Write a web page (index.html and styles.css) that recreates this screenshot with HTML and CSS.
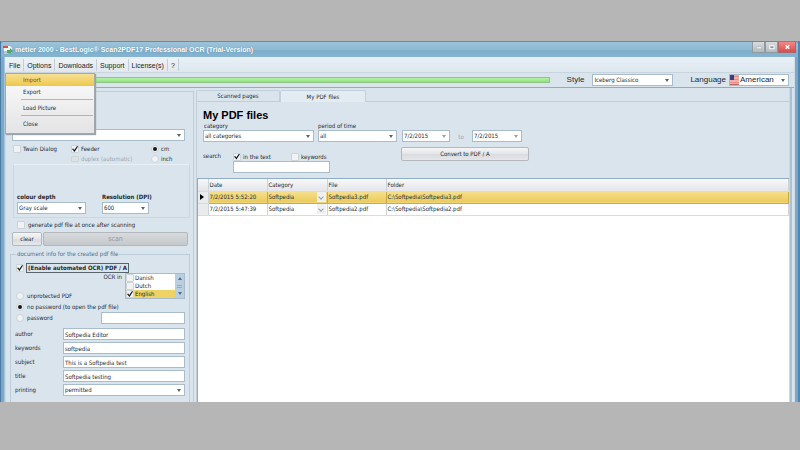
FILE: index.html
```html
<!DOCTYPE html>
<html lang="en">
<head>
<meta charset="utf-8">
<title>Scan2PDF17</title>
<link rel="stylesheet" href="styles.css">
</head>
<body>
<div class="window">
  <header class="titlebar">
    <svg class="app-icon" viewBox="0 0 10 10" aria-hidden="true">
      <path d="M1 1h6l2 2v5H1z" fill="#f5f7f5"/>
      <path d="M0 1h5v2H0z" fill="#d6504a"/>
      <path d="M1 6h4v3H1z" fill="#b9c6ce"/>
      <path d="M4 5h3V3l3 3-3 3V8H4z" fill="#55a468"/>
    </svg>
    <h1 class="title">métier 2000 - BestLogic® Scan2PDF17 Professional OCR (Trial-Version)</h1>
    <div class="window-buttons">
      <button class="win-btn" aria-label="Minimize"><svg viewBox="0 0 13 11"><path d="M4 5.500h6v2H4z" fill="#fff" stroke="#888" stroke-width=".4"/></svg></button>
      <button class="win-btn" aria-label="Maximize"><svg viewBox="0 0 13 11"><path d="M4.500 4h5v3.500h-5z" fill="#999" stroke="#fff" stroke-width="1.200"/></svg></button>
      <button class="win-btn win-close" aria-label="Close window"><svg viewBox="0 0 18 11"><path d="M7.500 3.500l4 4m0-4l-4 4" stroke="#fff" stroke-width="1.600"/></svg></button>
    </div>
  </header>

  <div class="client">
    <nav class="menubar">
      <button class="menu-item">File</button>
      <button class="menu-item">Options</button>
      <button class="menu-item">Downloads</button>
      <button class="menu-item">Support</button>
      <button class="menu-item">License(s)</button>
      <button class="menu-item">?</button>
      <div class="menu">
        <button class="menu-entry active">Import</button>
        <button class="menu-entry">Export</button>
        <hr>
        <button class="menu-entry">Load Picture</button>
        <hr>
        <button class="menu-entry">Close</button>
      </div>
    </nav>

    <div class="toolbar">
      <div class="progress"></div>
      <label class="tool-label" for="style">Style</label>
      <span class="combo style-combo"><select id="style"><option>Iceberg Classico</option></select></span>
      <label class="tool-label language-label" for="language">Language</label>
      <span class="combo language-combo">
        <svg class="flag" viewBox="0 0 9 10" aria-hidden="true"><path d="M0 0h9v10H0z" fill="#f3b0aa"/><path d="M0 1.500h9M0 4.500h9M0 7.500h9" stroke="#e98b86"/><path d="M0 0h4v5H0z" fill="#3c3f7c"/><path d="M0 9h9v1H0z" fill="#b86a66"/></svg>
        <select id="language"><option>American</option></select></span>
    </div>

    <div class="main">
      <aside class="scan-panel">
        <span class="combo"><select aria-label="Scanner"><option></option></select></span>
        <div class="source-options">
          <label class="check"><input type="checkbox">Twain Dialog</label>
          <label class="check"><input type="checkbox" checked>Feeder</label>
          <label class="check"><input type="radio" name="unit" checked>cm</label>
          <label class="check disabled duplex"><input type="checkbox" disabled>duplex (automatic)</label>
          <label class="check"><input type="radio" name="unit">inch</label>
        </div>
        <div class="quality">
          <label class="strong" for="depth">colour depth</label>
          <label class="strong" for="dpi">Resolution (DPI)</label>
          <span class="combo depth-combo"><select id="depth"><option>Gray scale</option></select></span>
          <span class="combo dpi-combo"><select id="dpi"><option>600</option></select></span>
        </div>
        <label class="check generate"><input type="checkbox">generate pdf file at once after scanning</label>
        <div class="scan-buttons">
          <button class="btn">clear</button>
          <button class="btn scan" disabled>scan</button>
        </div>
        <fieldset class="doc-info">
          <legend>document info for the created pdf file</legend>
          <label class="check ocr"><input type="checkbox" checked><span class="focus">(Enable automated OCR) PDF / A</span></label>
          <div class="protection">
            <span class="ocr-in">OCR in</span>
            <div class="listbox">
              <div class="languages">
                <label class="check"><input type="checkbox">Danish</label>
                <label class="check"><input type="checkbox">Dutch</label>
                <label class="check selected"><input type="checkbox" checked>English</label>
              </div>
              <div class="scrollbar"><i class="up"></i><i class="grip"></i><i class="down"></i></div>
            </div>
            <label class="check"><input type="radio" name="protect">unprotected PDF</label>
          </div>
          <label class="check open-pw"><input type="radio" name="protect" checked>no password (to open the pdf file)</label>
          <div class="password-row">
            <label class="check"><input type="radio" name="protect">password</label>
            <input class="field" type="text" aria-label="Password">
          </div>
          <div class="meta">
            <label for="author">author</label><input class="field" id="author" type="text" value="Softpedia Editor">
            <label for="keywords">keywords</label><input class="field" id="keywords" type="text" value="softpedia">
            <label for="subject">subject</label><input class="field" id="subject" type="text" value="This is a Softpedia test">
            <label for="doctitle">title</label><input class="field" id="doctitle" type="text" value="Softpedia testing">
            <label for="printing">printing</label><span class="combo"><select id="printing"><option>permitted</option></select></span>
          </div>
        </fieldset>
      </aside>

      <section class="files-panel">
        <div class="tabs" role="tablist">
          <button class="tab" role="tab">Scanned pages</button>
          <button class="tab current" role="tab" aria-selected="true">My PDF files</button>
        </div>
        <div class="page">
          <div class="filters">
            <h2>My PDF files</h2>
            <div class="filter-row">
              <div class="filter category-filter"><label for="category">category</label><span class="combo"><select id="category"><option>all categories</option></select></span></div>
              <div class="filter period-filter"><label for="period">period of time</label><span class="combo"><select id="period"><option>all</option></select></span></div>
              <span class="combo pale date-from"><select aria-label="From"><option>7/2/2015</option></select></span>
              <span class="to">to</span>
              <span class="combo pale date-to"><select aria-label="To"><option>7/2/2015</option></select></span>
            </div>
            <div class="search-row">
              <label for="search">search</label>
              <div class="search-box">
                <div class="search-options">
                  <label class="check"><input type="checkbox" checked>in the text</label>
                  <label class="check"><input type="checkbox">keywords</label>
                </div>
                <input class="field" id="search" type="text">
              </div>
              <button class="btn convert">Convert to PDF / A</button>
            </div>
          </div>
          <div class="grid">
            <table>
              <colgroup><col class="c-mark"><col class="c-date"><col class="c-cat"><col class="c-file"><col></colgroup>
              <thead><tr><th></th><th>Date</th><th>Category</th><th>File</th><th>Folder</th></tr></thead>
              <tbody>
                <tr class="selected"><td class="mark"><i class="pointer"></i></td><td>7/2/2015 5:52:20</td><td><div class="cat">Softpedia<i class="drop"></i></div></td><td>Softpedia3.pdf</td><td>C:\Softpedia\Softpedia3.pdf</td></tr>
                <tr><td class="mark"></td><td>7/2/2015 5:47:39</td><td><div class="cat">Softpedia<i class="drop"></i></div></td><td>Softpedia2.pdf</td><td>C:\Softpedia\Softpedia2.pdf</td></tr>
              </tbody>
            </table>
          </div>
        </div>
      </section>
    </div>
  </div>
</div>
</body>
</html>
```
FILE: styles.css
```css
* { box-sizing: border-box; }

body {
  margin: 0;
  min-height: 100vh;
  padding: 41px 0 48px;
  display: flex;
  flex-direction: column;
  background: #b6b6b6;
  color: #222a30;
  font: 6px/8px "DejaVu Sans Condensed", "DejaVu Sans", sans-serif;
}

button, input, select { font: inherit; color: inherit; margin: 0; }
button { border: 0; padding: 0; background: none; }

.window {
  flex: 1;
  display: flex;
  flex-direction: column;
  background: #7da7c6;
  border-left: 1px solid #4a7ba3;
  border-right: 2px solid #4f86b4;
}

/* Title bar */
.titlebar {
  height: 16px;
  display: flex;
  align-items: center;
  padding-left: 2px;
  border-top: 1px solid #5f8daa;
  border-radius: 3px 3px 0 0;
  background: linear-gradient(#9cc3da, #8ebad4 50%, #7fafcd 55%, #86b4d0);
}
.app-icon { width: 10px; height: 10px; margin-right: 2px; }
.title {
  flex: 1;
  margin: 0;
  color: #fff;
  font: bold 7px/10px "Liberation Sans", sans-serif;
  text-shadow: 0 0 1px #4a7896;
}
.window-buttons { display: flex; align-self: flex-start; margin-right: 2px; }
.win-btn {
  width: 13px;
  height: 11px;
  border: 1px solid #8f9ba3;
  border-top: 0;
  background: linear-gradient(#d8dcde, #b4bbc0);
}
.win-btn svg { display: block; width: 100%; height: 100%; }
.win-close { width: 18px; border-color: #a8686c; background: linear-gradient(#f08a88, #dc4a4c); }

/* Client area */
.client {
  flex: 1;
  display: flex;
  flex-direction: column;
  margin: 0 3px;
  border-left: 1px solid #a9c6da;
  border-right: 1px solid #cfe0ec;
  background: #dae4ed;
}

/* Menu bar */
.menubar {
  position: relative;
  display: flex;
  height: 16px;
  padding: 2px 0 1px 1px;
  background: linear-gradient(#e9f0f6, #dde7ef);
  border-bottom: 1px solid #c9d5de;
}
.menu-item {
  padding: 0 3px;
  border-right: 1px solid #c4ced6;
  background: linear-gradient(#eef2f5, #e2e8ee);
  font: 7px/13px "Liberation Sans", sans-serif;
  color: #1a1d20;
}
.menu {
  position: absolute;
  z-index: 1;
  top: 16px;
  left: 0;
  width: 90px;
  padding-bottom: 3px;
  border: 1px solid #a3a8ac;
  background: linear-gradient(#fbfbfb, #e4e4e6);
  box-shadow: 1px 1px 1px #9aa4ad;
}
.menu-entry {
  display: block;
  width: 100%;
  height: 12px;
  padding-left: 17px;
  text-align: left;
  line-height: 12px;
}
.menu-entry.active { background: linear-gradient(#f7df94, #eec94e); color: #6b5518; }
.menu hr { margin: 1px 1px 2px 15px; border: 0; border-top: 1px solid #b4b4b6; }

/* Toolbar */
.toolbar {
  display: flex;
  align-items: center;
  height: 15px;
  padding: 0 5px 1px 2px;
  border-bottom: 1px solid #8fabc6;
}
.progress {
  flex: 1;
  height: 6px;
  border: 1px solid #8fc486;
  background: linear-gradient(#b5f3a6, #8fe07f);
}
.tool-label { margin: 0 8px 0 17px; font: 8px/10px "Liberation Sans", sans-serif; }
.language-label { margin: 0 3px 0 17px; }
.style-combo { width: 81px; }
.language-combo { width: 60px; font: 8px/10px "Liberation Sans", sans-serif; }
.flag { width: 9px; height: 10px; flex: none; }

/* Controls */
.combo {
  position: relative;
  display: flex;
  height: 12px;
  border: 1px solid #a9bccb;
  background: #fff;
}
.combo select {
  appearance: none;
  width: 100%;
  min-width: 0;
  padding: 0 10px 0 1px;
  border: 0;
  border-radius: 0;
  background: transparent;
}
.combo::after {
  content: "";
  position: absolute;
  right: 3px;
  top: 4px;
  border: 2px solid transparent;
  border-top: 3px solid #56646e;
  border-bottom: 0;
  pointer-events: none;
}
.combo.pale::after { border-top-color: #98a2aa; }
.field {
  width: 100%;
  min-width: 0;
  height: 12px;
  padding: 0 1px;
  border: 1px solid #a9bccb;
  border-radius: 0;
  background: #fff;
}
.check { display: flex; align-items: center; gap: 3px; }
.check input {
  appearance: none;
  flex: none;
  display: grid;
  place-items: center;
  width: 8px;
  height: 8px;
  border: 1px solid #ccd4da;
  border-radius: 1px;
  background: #f0f2f4;
}
.check input[type="radio"] { border-radius: 50%; }
.check input[type="radio"]:checked::after {
  content: "";
  width: 4px;
  height: 4px;
  border-radius: 50%;
  background: #15181a;
}
.check input[type="checkbox"]:checked::after {
  content: "";
  width: 6px;
  height: 6px;
  background: #15181a;
  clip-path: polygon(0 50%, 20% 40%, 38% 65%, 85% 0, 100% 8%, 42% 100%);
}
.disabled { color: #9aa5ae; }
.disabled input { background: #dce2e8; height: 6px; }
.btn {
  height: 14px;
  border: 1px solid #b4b8bc;
  border-radius: 2px;
  background: linear-gradient(#f6f6f7, #e4e5e8 50%, #d9dbde 55%, #e6e7e9);
  line-height: 12px;
}

/* Columns */
.main { flex: 1; display: grid; grid-template-columns: 189px minmax(0, 1fr); gap: 2px; }

/* Scan panel */
.scan-panel {
  display: flex;
  flex-direction: column;
  margin-top: 3px;
  padding: 37px 5px 0 6px;
  border: solid #bccddb;
  border-width: 1px 1px 0;
  border-left-color: #c9d8e3;
  box-shadow: 2px 0 #dae4ed, 3px 0 #a9c2d5;
}
.scan-panel > .combo { margin-right: 3px; }
.source-options {
  display: grid;
  grid-template-columns: 58px 80px 1fr;
  grid-auto-rows: 10px;
  padding: 3px 0 0 1px;
}
.source-options .check { gap: 2px; }
.duplex { grid-column: 2; }
.quality {
  display: grid;
  grid-template-columns: 85px 1fr;
  margin: 0 -2px 0 1px;
  padding: 27px 3px 3px;
  border: 1px solid #cbd8e2;
  border-top-color: #e8eff5;
}
.strong { font-weight: bold; line-height: 10px; }
.depth-combo { width: 69px; }
.dpi-combo { width: 47px; }
.generate { height: 10px; margin: 2px 0 2px 5px; }
.scan-buttons { display: grid; grid-template-columns: 30px 1fr; gap: 1px; }
.scan { color: #94999d; font-size: 7px; background: linear-gradient(#d8dadc, #c6c9cc); }
.doc-info {
  flex: 1;
  margin: 4px -2px 0;
  padding: 5px 4px 0 5px;
  min-width: 0;
  border: solid #bccddb;
  border-width: 1px 1px 0;
}
.doc-info legend { padding: 0 1px; color: #4d6f8c; }
.ocr { height: 10px; font-weight: bold; gap: 2px; }
.focus { padding: 0 1px; border: 1px solid #59646c; line-height: 8px; }
.protection {
  display: grid;
  grid-template-columns: 1fr 60px;
  grid-template-rows: 18px 10px;
  column-gap: 3px;
}
.ocr-in { text-align: right; }
.listbox {
  grid-row: 1 / 3;
  grid-column: 2;
  display: flex;
  align-self: start;
  height: 26px;
  border: 1px solid #a9bccb;
  background: #fff;
}
.protection > .check { grid-row: 2; grid-column: 1; }
.languages { flex: 1; }
.languages .check { height: 8px; gap: 1px; }
.languages .selected { background: #efd266; }
.scrollbar {
  width: 9px;
  display: flex;
  flex-direction: column;
  align-items: center;
  justify-content: space-between;
  padding: 3px 0;
  background: #b9cfdf;
}
.up, .down { border: 2px solid transparent; }
.up { border-top: 0; border-bottom: 3px solid #506f88; }
.down { border-bottom: 0; border-top: 3px solid #506f88; }
.grip { width: 5px; height: 3px; border: solid #91adc2; border-width: 1px 0; }
.open-pw { height: 11px; }
.password-row {
  display: grid;
  grid-template-columns: 85px 1fr;
  margin-bottom: 4px;
}
.meta {
  display: grid;
  grid-template-columns: 48px 1fr;
  row-gap: 2px;
  align-items: center;
  margin-left: -1px;
}

/* Files panel */
.files-panel {
  display: flex;
  flex-direction: column;
  margin-right: 5px;
  padding-top: 2px;
  box-shadow: 1px 0 #c9d8e3, 3px 0 #a9c2d5;
}
.tabs { display: flex; border-bottom: 1px solid #bccddb; }
.tab {
  width: 84px;
  height: 11px;
  border: solid #c3d0da;
  border-width: 1px 1px 0;
  border-radius: 2px 2px 0 0;
  line-height: 10px;
}
.tab.current { background: #e4ecf3; margin-bottom: -1px; width: 86px; height: 12px; }
.page { flex: 1; display: flex; flex-direction: column; border-left: 1px solid #c3d0da; }
.filters { padding: 6px 6px 5px; }
.filters h2 { margin: 0; color: #000; font: bold 11px/14px "Liberation Sans", sans-serif; }
.filter-row { display: flex; align-items: flex-end; }
.filter label { display: block; padding-left: 1px; }
.category-filter { width: 111px; margin-right: 4px; }
.period-filter { width: 79px; margin-right: 5px; }
.period-filter label { padding-left: 0; }
.date-from { width: 48px; }
.to { width: 22px; text-align: center; color: #9aa5ae; line-height: 10px; }
.date-to { width: 50px; }
.search-row { display: flex; align-items: flex-start; margin-top: 5px; }
.search-row > label { width: 30px; padding-top: 5px; }
.search-box { width: 97px; margin-right: 71px; padding-top: 5px; }
.search-options { display: grid; grid-template-columns: 58px 1fr; height: 9px; }
.search-options .check { gap: 2px; white-space: nowrap; }
.convert { width: 128px; }

/* File table */
.grid { flex: 1; background: #fff; border: solid #8fabc6; border-width: 1px 0 0 1px; }
.grid table { width: 100%; border-collapse: collapse; table-layout: fixed; }
.c-mark { width: 10px; }
.c-date { width: 59px; }
.c-cat { width: 60px; }
.c-file { width: 59px; }
.grid th, .grid td {
  height: 12px;
  padding: 0 1px;
  border-right: 1px solid #d0d3d6;
  border-bottom: 1px solid #d9dcdf;
  text-align: left;
  font-weight: normal;
  white-space: nowrap;
}
.grid th { background: linear-gradient(#f7f8f9, #e3e5e8); }
.grid .mark { background: #e9ebed; }
.grid .selected td:not(.mark) {
  background: linear-gradient(#f6e08f, #ebca58);
  border-color: #c9ab4c;
}
.cat { display: flex; justify-content: space-between; align-items: center; }
.drop { width: 9px; height: 10px; display: grid; place-items: center; background: #eef0f1; }
.drop::after {
  content: "";
  width: 3px;
  height: 3px;
  border: solid #98a2aa;
  border-width: 0 1px 1px 0;
  transform: rotate(45deg);
}
.pointer {
  display: block;
  width: 0;
  margin-left: 1px;
  border: 3px solid transparent;
  border-left: 4px solid #000;
  border-right: 0;
}
```
